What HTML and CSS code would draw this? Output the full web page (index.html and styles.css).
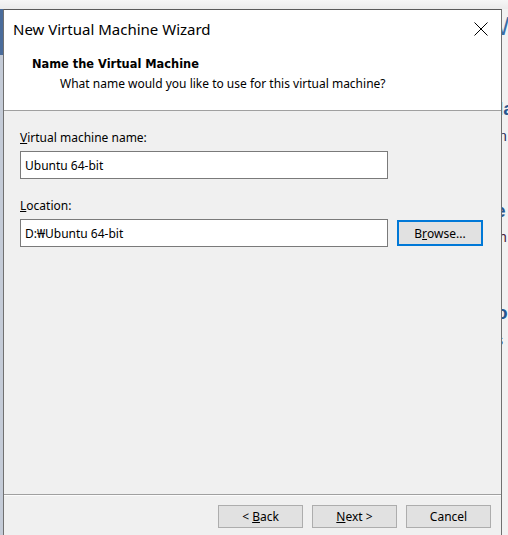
FILE: index.html
```html
<!DOCTYPE html>
<html>
<head>
<meta charset="utf-8">
<link rel="stylesheet" href="styles.css">
</head>
<body>
<div class="desktop">
  <div class="topstrip"></div>
  <div class="leftstrip"><div class="leftblue"></div></div>
  <div class="bgwin">
    <div class="bg-title">Wi</div>
    <div class="bg-h bg-h1">la</div>
    <div class="bg-t bg-t1">n</div>
    <div class="bg-h bg-h2">e</div>
    <div class="bg-t bg-t2">h</div>
    <div class="bg-h bg-h3">o</div>
    <div class="bg-t bg-t3">s</div>
  </div>
  <div class="dialog">
    <div class="titlebar">
      <span class="title">New Virtual Machine Wizard</span>
      <svg class="close" width="14" height="14" viewBox="0 0 14 14"><path d="M0.5 0.5 L13.5 13.5 M13.5 0.5 L0.5 13.5" stroke="#000" stroke-width="1" fill="none"/></svg>
    </div>
    <div class="header">
      <div class="h-title">Name the Virtual Machine</div>
      <div class="h-sub">What name would you like to use for this virtual machine?</div>
    </div>
    <div class="body">
      <div class="label"><u>V</u>irtual machine name:</div>
      <div class="field">Ubuntu 64-bit</div>
      <div class="label label2"><u>L</u>ocation:</div>
      <div class="row">
        <div class="field">D:₩Ubuntu 64-bit</div>
        <div class="btn btn-focus">B<u>r</u>owse...</div>
      </div>
    </div>
    <div class="footer">
      <div class="btn">&lt;&nbsp;<u>B</u>ack</div>
      <div class="btn"><u>N</u>ext&nbsp;&gt;</div>
      <div class="btn">Cancel</div>
    </div>
  </div>
</div>
</body>
</html>
```
FILE: styles.css
```css
html, body {
  margin: 0;
  padding: 0;
}
body {
  width: 508px;
  height: 535px;
  overflow: hidden;
  background: #f0f0f0;
  font-family: "Noto Sans", "Liberation Sans", sans-serif;
  font-size: 12px;
  color: #000;
}
.desktop {
  position: relative;
  width: 508px;
  height: 535px;
  overflow: hidden;
  background: #f2f2f2;
}
.topstrip {
  height: 9px;
  background: linear-gradient(#f6f6f6, #ebebeb);
}
.leftstrip {
  position: absolute;
  left: 0;
  top: 9px;
  width: 3px;
  height: 526px;
  background: #c4cbd7;
}
.leftblue {
  height: 46px;
  background: #4a6c9b;
}
.bgwin {
  position: absolute;
  left: 496px;
  top: 0;
  width: 40px;
  height: 535px;
  color: #2d5c93;
}
.bg-title {
  position: absolute;
  top: 11px;
  left: 0;
  font-size: 26px;
  color: #3a6ea8;
  font-family: "Liberation Sans", sans-serif;
}
.bg-h {
  position: absolute;
  left: 0;
  font-family: "Liberation Sans", sans-serif;
  font-weight: bold;
  font-size: 19px;
  color: #26578f;
}
.bg-t {
  position: absolute;
  left: 4px;
  font-family: "Liberation Sans", sans-serif;
  font-size: 14px;
  color: #2a2a55;
}
.bg-h1 { top: 98px; left: 2px; }
.bg-t1 { top: 128px; left: 3px; }
.bg-h2 { top: 200px; left: -1px; }
.bg-t2 { top: 229px; left: 3px; color: #4a1a3a; }
.bg-h3 { top: 302px; left: 0; }
.bg-t3 { top: 332px; left: 0; }

.dialog {
  position: absolute;
  left: 3px;
  top: 9px;
  width: 497px;
  height: 540px;
  border: 1px solid #707070;
  border-top-color: #5a5a5a;
  background: #f0f0f0;
  display: flex;
  flex-direction: column;
}
.titlebar {
  height: 37px;
  background: #fff;
  display: flex;
  align-items: center;
  justify-content: space-between;
  padding: 0 13px 0 9px;
}
.title {
  font-size: 15px;
  color: #000;
}
.close {
  display: block;
}
.header {
  height: 64px;
  background: #fff;
  border-bottom: 1px solid #a0a0a0;
  padding-top: 10px;
  box-sizing: border-box;
}
.h-title {
  font-family: "DejaVu Sans", sans-serif;
  font-weight: bold;
  font-size: 11.4px;
  line-height: 15px;
  padding-left: 28px;
}
.h-sub {
  margin-top: 4px;
  line-height: 15px;
  padding-left: 56px;
}
.body {
  height: 384px;
  padding: 19px 0 0 16px;
  box-sizing: border-box;
  border-bottom: 1px solid #a0a0a0;
}
.label {
  line-height: 16px;
  margin-bottom: 5px;
}
.label2 {
  margin-top: 19px;
}
.field {
  width: 368px;
  height: 28px;
  box-sizing: border-box;
  border: 1px solid #7a7a7a;
  background: #fff;
  padding: 0 4px;
  display: flex;
  align-items: center;
}
.row {
  display: flex;
  align-items: center;
  gap: 9px;
}
.btn {
  width: 85px;
  height: 23px;
  box-sizing: border-box;
  border: 1px solid #adadad;
  background: #e1e1e1;
  display: flex;
  align-items: center;
  justify-content: center;
}
.btn-focus {
  width: 86px;
  height: 26px;
  border: 2px solid #0078d7;
}
.footer {
  border-top: 1px solid #fcfcfc;
  display: flex;
  justify-content: flex-end;
  gap: 9px;
  padding: 9px 10px 0 0;
}
```
